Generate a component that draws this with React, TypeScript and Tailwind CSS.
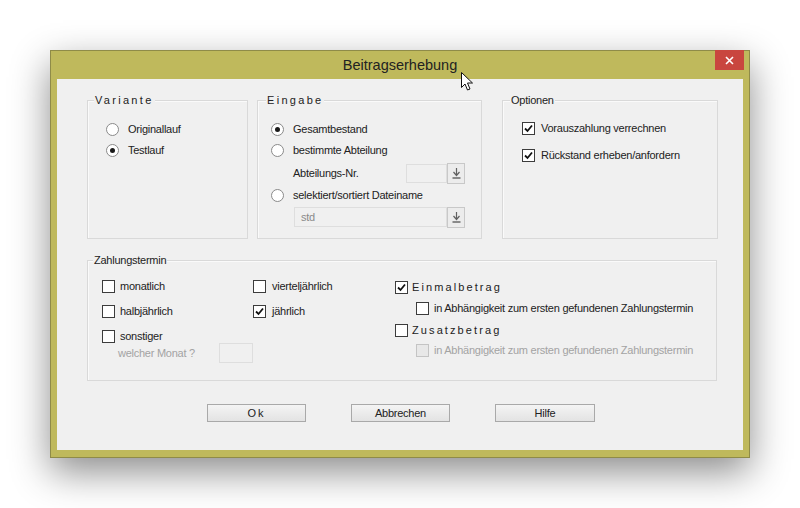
// Beitragserhebung — Dialog im Windows-8-Stil
import React from "react";

function Radio({ checked }: { checked?: boolean }) {
  return (
    <span className="w-[13px] h-[13px] rounded-full border border-[#8a8a8a] bg-white flex items-center justify-center shrink-0">
      {checked && <span className="w-[5px] h-[5px] rounded-full bg-[#1a1a1a]" />}
    </span>
  );
}

function Check({ checked, disabled }: { checked?: boolean; disabled?: boolean }) {
  return (
    <span
      className={
        disabled
          ? "w-[13px] h-[13px] border border-[#c4c4c4] bg-[#e8e8e8] shrink-0"
          : "w-[13px] h-[13px] border border-[#3c3c3c] bg-white flex items-center justify-center shrink-0"
      }
    >
      {checked && (
        <svg width="11" height="11" viewBox="0 0 11 11">
          <path d="M2 5.5 L4.5 8 L9 2.5" fill="none" stroke="#111" strokeWidth="1.8" />
        </svg>
      )}
    </span>
  );
}

function Group({ label, spaced, lx, className, children }: { label: string; spaced?: boolean; lx: string; className: string; children?: React.ReactNode }) {
  return (
    <div className={"relative border border-[#d9d9d9] shadow-[inset_1px_1px_0_#fafafa] " + className}>
      <span
        className={
          "absolute -top-[7px] bg-[#f0f0f0] px-[1px] text-[11px] leading-[13px] text-[#222] " +
          lx +
          (spaced ? " tracking-[2.3px]" : "")
        }
      >
        {label}
      </span>
      {children}
    </div>
  );
}

function DropButton() {
  return (
    <span className="w-[18px] h-[21px] border border-[#c8c8c8] bg-[#ececec] flex items-center justify-center shrink-0">
      <svg width="9" height="12" viewBox="0 0 9 12">
        <path d="M4.5 1 V8" stroke="#606060" strokeWidth="1.2" />
        <path d="M1.5 5 L4.5 8.5 L7.5 5" fill="none" stroke="#606060" strokeWidth="1.2" />
        <path d="M0.5 11 H8.5" stroke="#606060" strokeWidth="1.4" />
      </svg>
    </span>
  );
}

function Btn({ children, className }: { children: React.ReactNode; className: string }) {
  return (
    <button className={"h-[18px] border border-[#a9a9a9] bg-gradient-to-b from-[#f4f4f4] to-[#e3e3e3] text-[11px] leading-[16px] text-[#222] " + className}>
      {children}
    </button>
  );
}

export default function App() {
  return (
    <div className="relative w-[800px] h-[508px] bg-white overflow-hidden pt-[50px] pl-[50px] font-['Liberation_Sans',Arial,sans-serif] text-[11px] tracking-[-0.25px] text-[#222]">
      {/* Fenster */}
      <div className="w-[700px] h-[408px] bg-[#bfb95c] border border-[#8f8b48] shadow-[0_14px_36px_rgba(0,0,0,0.45)] flex flex-col">
        <div className="relative h-[28px] shrink-0 flex items-center justify-center">
          <span className="text-[14.5px] tracking-normal text-[#222] mt-[1px]">Beitragserhebung</span>
          <span className="absolute right-[5px] -top-[1px] w-[29px] h-[20px] bg-[#c9463f] flex items-center justify-center">
            <svg width="9" height="9" viewBox="0 0 9 9">
              <path d="M1 1 L8 8 M8 1 L1 8" stroke="white" strokeWidth="1.6" />
            </svg>
          </span>
        </div>

        <div className="flex-1 mx-[6px] mb-[7px] bg-[#f0f0f0] pl-[30px] pt-[21px]">
          <div className="flex">
            {/* Variante */}
            <Group label="Variante" spaced lx="left-[6px]" className="w-[161px] h-[139px]">
              <div className="pt-[18px] pl-[18px]">
                <div className="h-[21px] flex items-center gap-[9px]">
                  <Radio />
                  <span>Originallauf</span>
                </div>
                <div className="h-[21px] flex items-center gap-[9px]">
                  <Radio checked />
                  <span>Testlauf</span>
                </div>
              </div>
            </Group>

            {/* Eingabe */}
            <Group label="Eingabe" spaced lx="left-[8px]" className="ml-[9px] w-[225px] h-[139px]">
              <div className="pt-[18px] pl-[13px] pr-[16px]">
                <div className="h-[21px] flex items-center gap-[9px]">
                  <Radio checked />
                  <span>Gesamtbestand</span>
                </div>
                <div className="h-[21px] flex items-center gap-[9px]">
                  <Radio />
                  <span>bestimmte Abteilung</span>
                </div>
                <div className="h-[24px] flex items-center pl-[22px]">
                  <span className="flex-1">Abteilungs-Nr.</span>
                  <span className="w-[41px] h-[19px] border border-[#dedede] bg-[#f0f0f0]" />
                  <DropButton />
                </div>
                <div className="h-[21px] flex items-center gap-[9px]">
                  <Radio />
                  <span>selektiert/sortiert Dateiname</span>
                </div>
                <div className="h-[22px] flex items-center pl-[23px]">
                  <span className="flex-1 h-[20px] border border-[#dedede] bg-[#f0f0f0] pl-[6px] leading-[18px] text-[#8a8a8a]">std</span>
                  <DropButton />
                </div>
              </div>
            </Group>

            {/* Optionen */}
            <Group label="Optionen" lx="left-[7px]" className="ml-[20px] w-[216px] h-[139px]">
              <div className="pt-[14px] pl-[19px]">
                <div className="h-[27px] flex items-center gap-[6px]">
                  <Check checked />
                  <span>Vorauszahlung verrechnen</span>
                </div>
                <div className="h-[27px] flex items-center gap-[6px]">
                  <Check checked />
                  <span>Rückstand erheben/anfordern</span>
                </div>
              </div>
            </Group>
          </div>

          {/* Zahlungstermin */}
          <Group label="Zahlungstermin" lx="left-[5px]" className="mt-[21px] w-[630px] h-[121px]">
            <div className="flex pl-[14px]">
              <div className="w-[151px] pt-[13px]">
                <div className="h-[25px] flex items-center gap-[5px]">
                  <Check />
                  <span>monatlich</span>
                </div>
                <div className="h-[25px] flex items-center gap-[5px]">
                  <Check />
                  <span>halbjährlich</span>
                </div>
                <div className="h-[24px] flex items-center gap-[5px]">
                  <Check />
                  <span>sonstiger</span>
                </div>
                <div className="-mt-[5px] h-[20px] flex items-center pl-[16px]">
                  <span className="w-[103px] text-[#a3a3a3]">welcher Monat ?</span>
                  <span className="w-[34px] h-[20px] border border-[#dedede] bg-[#f0f0f0]" />
                </div>
              </div>
              <div className="w-[142px] pt-[13px]">
                <div className="h-[25px] flex items-center gap-[6px]">
                  <Check />
                  <span>vierteljährlich</span>
                </div>
                <div className="h-[25px] flex items-center gap-[6px]">
                  <Check checked />
                  <span>jährlich</span>
                </div>
              </div>
              <div className="flex-1 pt-[15px]">
                <div className="h-[22px] flex items-center gap-[4px]">
                  <Check checked />
                  <span className="tracking-[2.1px]">Einmalbetrag</span>
                </div>
                <div className="h-[20px] flex items-center gap-[5px] pl-[21px]">
                  <Check />
                  <span>in Abhängigkeit zum ersten gefundenen Zahlungstermin</span>
                </div>
                <div className="h-[24px] flex items-center gap-[4px]">
                  <Check />
                  <span className="tracking-[2.1px]">Zusatzbetrag</span>
                </div>
                <div className="h-[16px] flex items-center gap-[5px] pl-[21px]">
                  <Check disabled />
                  <span className="text-[#a3a3a3]">in Abhängigkeit zum ersten gefundenen Zahlungstermin</span>
                </div>
              </div>
            </div>
          </Group>

          {/* Schaltflächen */}
          <div className="flex mt-[23px]">
            <Btn className="ml-[120px] w-[99px] tracking-[2px]">Ok</Btn>
            <Btn className="ml-[45px] w-[99px]">Abbrechen</Btn>
            <Btn className="ml-[45px] w-[100px]">Hilfe</Btn>
          </div>
        </div>
      </div>

      {/* Mauszeiger */}
      <svg className="absolute left-[461px] top-[72px]" width="13" height="20" viewBox="0 0 13 20">
        <path d="M0.5 0.5 V15.5 L4 12 L6.5 18 L9 17 L6.5 11 L11.5 11 Z" fill="white" stroke="#111" strokeWidth="1" strokeLinejoin="round" />
      </svg>
    </div>
  );
}
